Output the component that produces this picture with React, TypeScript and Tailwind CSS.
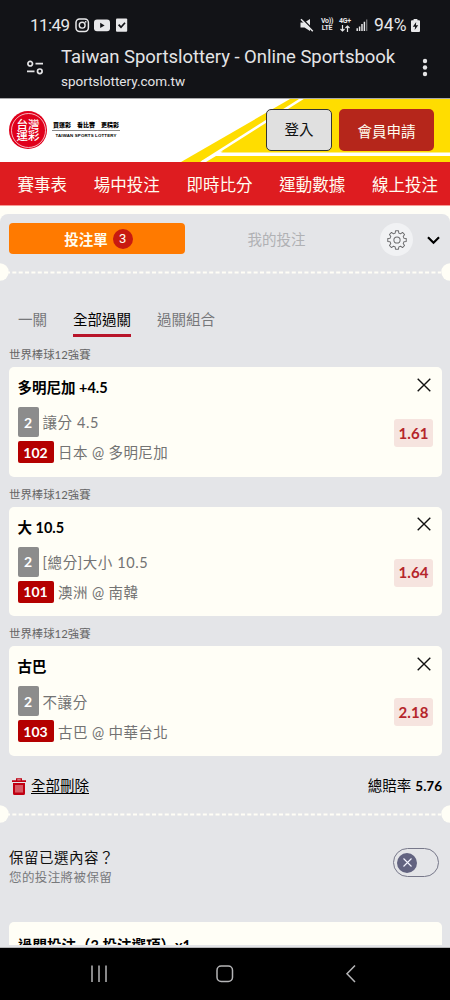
import React from "react";

const cjk = "font-['Lato','Noto_Sans_CJK_TC',sans-serif]";

function StatusBar() {
  return (
    <div className="flex h-[50px] items-center pl-[30px] pr-[30px] text-[#e8e8ea]">
      <span className="w-[45px] text-[17px] leading-[20px] tracking-[-0.6px]">11:49</span>
      <svg className="h-[16px] w-[54px]" viewBox="0 0 54 16" fill="none">
        <rect x="1" y="2" width="12.4" height="12.4" rx="3.6" stroke="#e8e8ea" strokeWidth="1.5" />
        <circle cx="7.2" cy="8.2" r="2.9" stroke="#e8e8ea" strokeWidth="1.4" />
        <circle cx="10.7" cy="4.8" r="0.9" fill="#e8e8ea" />
        <rect x="19" y="2.4" width="16" height="11.8" rx="3" fill="#e8e8ea" />
        <path d="M25.2 5.8v5.2l4.4-2.6z" fill="#121317" />
        <rect x="41" y="1.4" width="11.2" height="13.4" rx="1" fill="#e8e8ea" />
        <path d="M43.6 7.6l2.4 2.6 4-4.4" stroke="#121317" strokeWidth="1.7" />
      </svg>
      <div className="flex-1" />
      <svg className="mr-[6px] h-[14px] w-[14px]" viewBox="0 0 14 14" fill="none">
        <path d="M0.500 4.500h4L10 1v12L4.500 9.500h-4z" fill="#e8e8ea" />
        <path d="M2 0.500l12 12" stroke="#121317" strokeWidth="1.500" />
        <path d="M1 1.200l11.800 12" stroke="#e8e8ea" strokeWidth="1.500" />
      </svg>
      <div className="mr-[4px] w-[14px] text-center text-[7px] font-bold leading-[7px] tracking-[-0.3px]">
        <div>Vo))</div>
        <div>LTE</div>
      </div>
      <div className="mr-[4px] flex w-[14px] flex-col items-center text-[7px] font-bold leading-[7px] tracking-[-0.2px]">
        <div>4G+</div>
        <svg className="h-[7px] w-[10px]" viewBox="0 0 10 7" fill="none" stroke="#e8e8ea" strokeWidth="1.2">
          <path d="M2.5 0v6M0.5 4l2 2 2-2M7.5 7V1M5.500 3l2-2 2 2" />
        </svg>
      </div>
      <svg className="mr-[6px] h-[12px] w-[12px]" viewBox="0 0 12 13" fill="#e8e8ea">
        <path d="M0 10h1.600v3H0zM2.600 8h1.600v5H2.600zM5.200 5.500h1.600V13H5.200zM7.800 3h1.600v10H7.800z" />
        <path d="M10.300 0.500h1.500V13h-1.500z" opacity=".45" />
      </svg>
      <span className="w-[37px] whitespace-nowrap text-[17.500px] leading-[20px] tracking-[0px]">94%</span>
      <svg className="h-[13px] w-[9px] shrink-0" viewBox="0 0 9 13">
        <path d="M2.6 0h3.8v1.2H8a1 1 0 011 1V12a1 1 0 01-1 1H1a1 1 0 01-1-1V2.200a1 1 0 011-1h1.600z" fill="#e8e8ea" />
        <path d="M5.200 3L1.800 7.700h2.300L3.700 11l3.500-4.800H4.900z" fill="#121317" />
      </svg>
    </div>
  );
}

function BrowserBar() {
  return (
    <div className="flex h-[48px] pl-[26px] pr-[22px]">
      <svg className="mt-[10px] h-[15px] w-[18px]" viewBox="0 0 18 15" fill="none" stroke="#e4e4e6" strokeWidth="1.700">
        <circle cx="4.200" cy="3.700" r="2.300" />
        <path d="M9.500 3.700H17M1 11.300h7.500" />
        <circle cx="13.800" cy="11.300" r="2.300" />
      </svg>
      <div className="ml-[17px] flex-1 whitespace-nowrap text-[#e4e4e6]">
        <div className="mt-[-4px] text-[18.500px] leading-[23px] tracking-[-0.040px]">Taiwan Sportslottery - Online Sportsbook</div>
        <div className="mt-[3px] text-[13.500px] leading-[18px]">sportslottery.com.tw</div>
      </div>
      <svg className="mt-[8px] h-[19px] w-[6px]" viewBox="0 0 6 19" fill="#e4e4e6">
        <circle cx="3" cy="3" r="2.200" />
        <circle cx="3" cy="9.500" r="2.200" />
        <circle cx="3" cy="16" r="2.200" />
      </svg>
    </div>
  );
}

function SiteHeader() {
  return (
    <header className="relative flex h-[64px] shrink-0 items-start border-t border-[#a9a9ac] bg-white">
      <svg className="absolute left-0 top-0 h-[63px] w-[450px]" viewBox="0 99 450 63">
        <path d="M181 162L290 99H450V162z" fill="#ffdd00" />
        <path d="M202 162L303 98" stroke="#fff" strokeWidth="2.600" />
        <path d="M200 162L219 151.500H223L221 152.500H450V156H216L206 162z" fill="#fff" />
      </svg>
      <div className="relative ml-[9px] mt-[12px] flex h-[38px] w-[38px] items-center justify-center rounded-full bg-[#e0001b]">
        <div className="flex h-[35px] w-[35px] flex-col items-center justify-center rounded-full border border-white/70 text-[11.500px] font-medium leading-[11px] text-white">
          <span>台灣</span>
          <span>運彩</span>
        </div>
      </div>
      <div className="relative ml-[5px] mt-[20px] w-[68px] whitespace-nowrap text-black">
        <div className="flex h-[12px] justify-between border-b border-[#888] px-[1px] text-[6px] font-black leading-[11px]">
          <span>買運彩</span>
          <span>看比賽</span>
          <span>更精彩</span>
        </div>
        <div className="mt-[1px] text-center font-['Liberation_Sans',sans-serif] text-[4.400px] font-bold leading-[7px] tracking-[0.150px]">TAIWAN SPORTS LOTTERY</div>
      </div>
      <div className="flex-1" />
      <button className="relative mt-[10px] h-[42px] w-[66px] rounded-[5px] border border-[#333] bg-[#e0e0e0] text-[14.500px] text-[#111]">登入</button>
      <button className="relative ml-[7px] mr-[16px] mt-[10px] h-[42px] w-[95px] rounded-[5px] bg-[#b5261b] pt-[3px] text-[14.500px] text-[#fffdf0]">會員申請</button>
    </header>
  );
}

function Perforation() {
  return (
    <svg className="block h-[18px] w-[450px]" viewBox="0 0 450 18">
      <path d="M6 9.500H441" stroke="#fffef6" strokeWidth="2.200" strokeDasharray="4 2.350" />
      <circle cx="0" cy="9" r="8.700" fill="#fffef6" />
      <circle cx="450" cy="9" r="8.700" fill="#fffef6" />
    </svg>
  );
}

const gearPoints = Array.from({ length: 8 }, (_, i) =>
  [
    [-15, 7.8],
    [-9, 10.2],
    [9, 10.2],
    [15, 7.8],
  ].map(([offset, radius]) => {
    const angle = ((i * 45 + offset) * Math.PI) / 180;
    return `${(12 + radius * Math.sin(angle)).toFixed(2)},${(12 - radius * Math.cos(angle)).toFixed(2)}`;
  })
)
  .flat()
  .join(" ");

type Bet = { title: string; market: string; code: string; match: string; odds: string };

const bets: Bet[] = [
  { title: "多明尼加 +4.5", market: "讓分 4.5", code: "102", match: "日本 @ 多明尼加", odds: "1.61" },
  { title: "大 10.5", market: "[總分]大小 10.5", code: "101", match: "澳洲 @ 南韓", odds: "1.64" },
  { title: "古巴", market: "不讓分", code: "103", match: "古巴 @ 中華台北", odds: "2.18" },
];

function BetCard({ bet }: { bet: Bet }) {
  return (
    <section className="h-[139.700px]">
      <div className="h-[21px] text-[11.400px] leading-[17px] text-[#666]">世界棒球12強賽</div>
      <div className="flex h-[109.500px] justify-between rounded-[5px] bg-[#fffef6] pl-[8.500px] pr-[9px]">
        <div className="whitespace-nowrap">
          <div className="mt-[10px] h-[20px] text-[14.500px] font-bold leading-[22px] text-black">{bet.title}</div>
          <div className="mt-[10px] flex h-[30px] items-center">
            <span className="flex h-[30px] w-[21px] items-center justify-center rounded-[2px] bg-[#8c8c8c] text-[14px] font-bold text-white">2</span>
            <span className="ml-[4px] pt-[2px] text-[14.500px] tracking-[0.600px] text-[#737373]">{bet.market}</span>
          </div>
          <div className="mt-[4px] flex h-[22px] items-center">
            <span className="flex h-[22px] w-[36px] items-center justify-center rounded-[2px] bg-[#b40000] text-[14px] font-bold text-white">{bet.code}</span>
            <span className="ml-[4.500px] pt-[2px] text-[14.500px] tracking-[0.400px] text-[#737373]">{bet.match}</span>
          </div>
        </div>
        <div className="flex flex-col items-end">
          <svg className="mr-[2px] mt-[10.500px] h-[14px] w-[14px]" viewBox="0 0 14 14" stroke="#111" strokeWidth="1.400">
            <path d="M0.700 0.700L13.300 13.300M13.300 0.700L0.700 13.300" />
          </svg>
          <span className="mt-[27.500px] flex h-[28px] w-[39px] items-center justify-center rounded-[3px] bg-[#f6e4df] text-[15px] font-bold tracking-[0.100px] text-[#b5262b]">{bet.odds}</span>
        </div>
      </div>
    </section>
  );
}

export default function App() {
  return (
    <div className={`flex h-[1000px] w-[450px] flex-col overflow-hidden bg-[#fffef6] ${cjk}`}>
      <div className="h-[98px] shrink-0 bg-[#121317] font-['Roboto',sans-serif]">
        <StatusBar />
        <BrowserBar />
      </div>
      <SiteHeader />
      <nav className="flex h-[44px] shrink-0 items-center justify-between whitespace-nowrap border-b border-[#f59a94] bg-[#de1c20] pl-[17.500px] pr-[12px] pt-[3px] text-[16.500px] text-[#fffdf0]">
        <span>賽事表</span>
        <span>場中投注</span>
        <span>即時比分</span>
        <span>運動數據</span>
        <span>線上投注</span>
      </nav>
      <main className="mt-[8px] h-[731px] shrink-0 overflow-hidden rounded-t-[8px] bg-[#e4e5e8]">
        <div className="flex h-[49px] items-start px-[9px] pt-[9px]">
          <div className="flex h-[31px] w-[176px] items-center justify-center gap-[5px] rounded-[4px] bg-[#ff7a00] pl-[3px] text-[14.500px] font-bold text-[#fffdf0]">
            <span className="pt-[2px]">投注單</span>
            <span className="flex h-[20px] w-[20px] items-center justify-center rounded-full bg-[#c81a10] font-['Roboto',sans-serif] text-[13px] font-normal">3</span>
          </div>
          <div className="h-[31px] w-[183px] pt-px text-center text-[14.500px] leading-[31px] text-[#b0b1b4]">我的投注</div>
          <div className="ml-[12px] flex h-[33px] w-[33px] items-center justify-center rounded-full bg-[#f1f2f4]">
            <svg className="h-[22px] w-[22px]" viewBox="0 0 24 24" fill="none" stroke="#6b6b6d" strokeWidth="1.100" strokeLinejoin="round">
              <polygon points={gearPoints} />
              <circle cx="12" cy="12" r="3.400" />
            </svg>
          </div>
          <svg className="ml-[14px] mt-[12.500px] h-[9px] w-[13px]" viewBox="0 0 13 9" fill="none" stroke="#000" strokeWidth="2.200">
            <path d="M1 1.200L6.500 6.700L12 1.200" />
          </svg>
        </div>
        <Perforation />
        <div className="mt-[25px] flex h-[32px] gap-[26px] pl-[18px] text-[14.500px] leading-[28px] text-[#76777a]">
          <span>一關</span>
          <span className="h-[31px] border-b-[3px] border-[#b8142a] text-black">全部過關</span>
          <span>過關組合</span>
        </div>
        <div className="mt-[8px] pl-[9px] pr-[8px]">
          {bets.map((bet) => (
            <BetCard key={bet.code} bet={bet} />
          ))}
        </div>
        <div className="mt-[6px] flex h-[30px] items-center pl-[12px] pr-[8px]">
          <svg className="h-[17px] w-[14px]" viewBox="0 0 14 17">
            <path d="M4 2.200V.3h6v1.900h4v1.900H0V2.200zM5.300 2.200h3.400v-.8H5.300zM1 5h12v10.500a1.500 1.500 0 01-1.500 1.500h-9A1.500 1.500 0 011 15.500z" fill="#c00012" fillRule="evenodd" />
            <path d="M4 7v7.500M6 7v7.500M8 7v7.500M10 7v7.500" stroke="#f3c8cc" strokeWidth=".9" />
          </svg>
          <span className="ml-[5px] text-[14.500px] underline underline-offset-[2px]">全部刪除</span>
          <div className="flex-1" />
          <span className="flex items-center gap-[4px] text-[14.500px]">
            <span>總賠率</span>
            <b className="text-[13.500px]">5.76</b>
          </span>
        </div>
        <div className="mt-[4px]"><Perforation /></div>
        <div className="mt-[24px] flex h-[74.500px] justify-between pl-[9px] pr-[11px]">
          <div>
            <div className="h-[21px] text-[14.500px] leading-[22px] tracking-[0.500px] text-[#111]">保留已選內容？</div>
            <div className="text-[12.500px] leading-[20px] tracking-[0.400px] text-[#77787b]">您的投注將被保留</div>
          </div>
          <div className="mt-[1px] flex h-[29px] w-[46px] items-center rounded-full border border-[#77788a] pl-[3px]">
            <div className="flex h-[20px] w-[20px] items-center justify-center rounded-full bg-[#626380]">
              <svg className="h-[9px] w-[9px]" viewBox="0 0 9 9" stroke="#f4f4ff" strokeWidth="1.100"><path d="M.5.500l8 8M8.500.500l-8 8" /></svg>
            </div>
          </div>
        </div>
        <div className="ml-[9px] mr-[8px] h-[24px] overflow-hidden rounded-t-[5px] bg-[#fffef6] pl-[9px] pt-[13px] text-[14.500px] font-bold leading-[22px]">過關投注（3 投注選項）x1</div>
      </main>
      <footer className="flex h-[55px] shrink-0 border-t-[2px] border-[#e4e5e8] bg-black">
        <svg className="h-[53px] w-[450px]" viewBox="0 947 450 53" fill="none" stroke="#b5b5b7" strokeWidth="1.500">
          <path d="M0 947.500H450" strokeWidth="1" />
          <path d="M92 965.500v16.500M99 965.500v16.500M106 965.500v16.500M355 965.500l-8 8.200 8 8.200" />
          <rect x="217" y="966" width="15.500" height="15.500" rx="4.200" />
        </svg>
      </footer>
    </div>
  );
}
